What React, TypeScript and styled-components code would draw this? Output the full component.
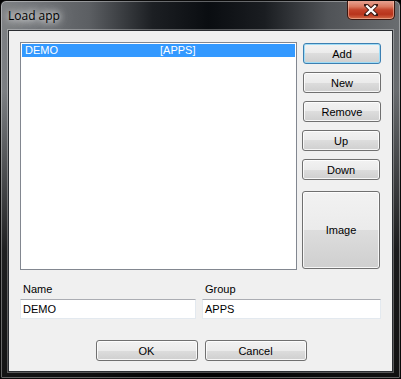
import React from "react";
import styled, { createGlobalStyle, css } from "styled-components";

const Global = createGlobalStyle`
  html, body { margin: 0; padding: 0; background: #000; }
  * { box-sizing: border-box; }
  body { font-family: "Liberation Sans", Arial, sans-serif; font-size: 11px; }
`;

const Window = styled.div`
  width: 401px;
  height: 379px;
  border: 1px solid #0a0a0a;
  border-radius: 6px 6px 2px 2px;
  box-shadow: inset 0 0 0 1px rgba(255, 255, 255, 0.35);
  background:
    linear-gradient(to bottom, rgba(0,0,0,0) 0px, rgba(0,0,0,0) 90px, rgba(0,0,0,0.75) 250px, rgba(0,0,0,0.85) 379px),
    linear-gradient(to right, #7d8084 0%, #5c5f63 22%, #1c1f23 38%, #0a0d11 52%, #1a1d21 66%, #505357 82%, #6a6d70 100%);
  display: flex;
  flex-direction: column;
  overflow: hidden;
`;

const TitleBar = styled.div`
  height: 29px;
  display: flex;
  align-items: flex-start;
  justify-content: space-between;
  padding: 0 5px 0 7px;
`;

const Title = styled.div`
  font-family: "Open Sans", "Noto Sans", sans-serif;
  font-size: 12px;
  color: #000;
  margin-top: 6px;
  text-shadow: 0 0 6px #fff, 0 0 10px rgba(255,255,255,0.9), 0 0 16px rgba(255,255,255,0.7);
`;

const CloseButton = styled.div`
  width: 48px;
  height: 20px;
  margin-top: -1px;
  border: 1px solid #3a1710;
  border-top: none;
  border-radius: 0 0 5px 5px;
  background: linear-gradient(to bottom, #e9a99a 0%, #d9785f 35%, #c3432a 52%, #b8341c 75%, #d36a48 100%);
  box-shadow: inset 0 0 0 1px rgba(255, 220, 200, 0.45);
  display: flex;
  align-items: center;
  justify-content: center;
`;

const Client = styled.div`
  margin: 0 7px;
  height: 342px;
  background: #f0f0f0;
  border: 1px solid #2a2d31;
  box-shadow: 0 0 0 1px rgba(255,255,255,0.3);
  padding: 11px 11px 0 11px;
  display: flex;
  flex-direction: column;
  color: #000;
`;

const TopRow = styled.div`
  display: flex;
  gap: 6px;
`;

const ListBox = styled.div`
  width: 277px;
  height: 228px;
  background: #fff;
  border: 1px solid #828790;
  padding: 1px;
`;

const ListRow = styled.div<{ $selected?: boolean }>`
  height: 13px;
  display: flex;
  align-items: center;
  padding-left: 3px;
  font-size: 11px;
  line-height: 13px;
  ${(p) =>
    p.$selected &&
    css`
      background: #3399ff;
      color: #fff;
    `}
`;

const Cell = styled.span<{ $w: number }>`
  width: ${(p) => p.$w}px;
`;

const ButtonColumn = styled.div`
  display: flex;
  flex-direction: column;
  gap: 8px;
  padding-top: 1px;
`;

const Button = styled.div<{ $default?: boolean; $w?: number; $h?: number; $shift?: number }>`
  width: ${(p) => p.$w ?? 78}px;
  height: ${(p) => p.$h ?? 21}px;
  margin-left: ${(p) => p.$shift ?? 0}px;
  border: 1px solid #707070;
  border-radius: 3px;
  background: linear-gradient(to bottom, #f2f2f2 0%, #ebebeb 50%, #dddddd 50%, #cfcfcf 100%);
  box-shadow: inset 0 0 0 1px rgba(255,255,255,0.8);
  display: flex;
  align-items: center;
  justify-content: center;
  font-size: 11px;
  color: #000;
  ${(p) =>
    p.$default &&
    css`
      border-color: #3c7fb1;
      box-shadow: inset 0 0 0 1px #9fdcf6;
    `}
`;

const ImageButton = styled(Button)`
  margin-top: 3px;
`;

const FieldRow = styled.div`
  display: flex;
  gap: 6px;
  margin-top: 13px;
`;

const Field = styled.div<{ $w: number }>`
  width: ${(p) => p.$w}px;
  display: flex;
  flex-direction: column;
  gap: 3px;
`;

const Label = styled.div`
  font-size: 11px;
  padding-left: 3px;
  height: 13px;
  line-height: 13px;
`;

const TextBox = styled.div`
  height: 20px;
  background: #fff;
  border: 1px solid #e3e9ef;
  border-top-color: #abadb3;
  padding-left: 2px;
  display: flex;
  align-items: center;
  font-size: 11px;
`;

const BottomRow = styled.div`
  display: flex;
  justify-content: center;
  gap: 7px;
  margin-top: 21px;
  padding-left: 1px;
`;

export default function App() {
  return (
    <>
      <Global />
      <Window>
        <TitleBar>
          <Title>Load app</Title>
          <CloseButton>
            <svg width="14" height="12" viewBox="0 0 14 12">
              <path d="M2 1 L12 11 M12 1 L2 11" stroke="#3a1a14" strokeWidth="4.2" strokeLinecap="square" />
              <path d="M2.3 1.5 L11.7 10.5 M11.7 1.5 L2.3 10.5" stroke="#fff" strokeWidth="2.4" />
            </svg>
          </CloseButton>
        </TitleBar>
        <Client>
          <TopRow>
            <ListBox>
              <ListRow $selected>
                <Cell $w={135}>DEMO</Cell>
                <Cell $w={60}>[APPS]</Cell>
              </ListRow>
            </ListBox>
            <ButtonColumn>
              <Button $default>Add</Button>
              <Button>New</Button>
              <Button>Remove</Button>
              <Button $shift={-1}>Up</Button>
              <Button $shift={-1}>Down</Button>
              <ImageButton $shift={-1} $h={78}>Image</ImageButton>
            </ButtonColumn>
          </TopRow>
          <FieldRow>
            <Field $w={177}>
              <Label>Name</Label>
              <TextBox>DEMO</TextBox>
            </Field>
            <Field $w={180}>
              <Label>Group</Label>
              <TextBox>APPS</TextBox>
            </Field>
          </FieldRow>
          <BottomRow>
            <Button $w={102}>OK</Button>
            <Button $w={102}>Cancel</Button>
          </BottomRow>
        </Client>
      </Window>
    </>
  );
}
